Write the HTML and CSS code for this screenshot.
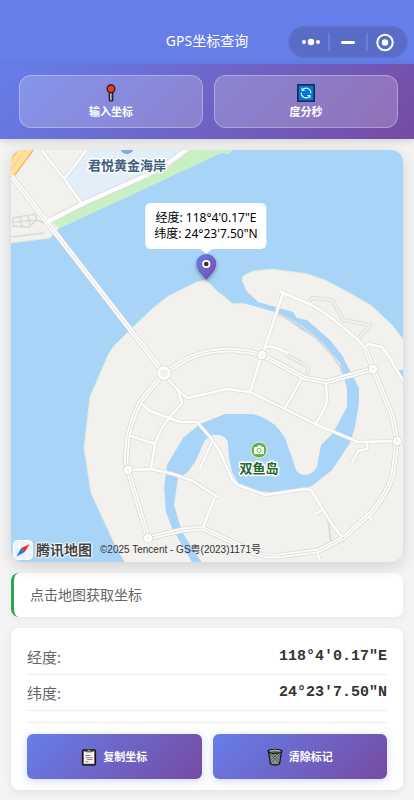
FILE: index.html
```html
<!DOCTYPE html>
<html lang="zh-CN">
<head>
<meta charset="utf-8">
<meta name="viewport" content="width=device-width, initial-scale=1">
<title>GPS坐标查询</title>
<link rel="stylesheet" href="styles.css">
</head>
<body>
<header class="navbar">
  <h1 class="navbar-title">GPS坐标查询</h1>
  <div class="capsule">
    <button class="capsule-btn" type="button" aria-label="更多">
      <svg width="20" height="20" viewBox="0 0 20 20" fill="#fff"><circle cx="3" cy="10" r="2"/><circle cx="10" cy="10" r="3.2"/><circle cx="17" cy="10" r="2"/></svg>
    </button>
    <button class="capsule-btn" type="button" aria-label="最小化">
      <svg width="20" height="20" viewBox="0 0 20 20"><path d="M4.500 10.500H15.500" stroke="#fff" stroke-width="3" stroke-linecap="round"/></svg>
    </button>
    <button class="capsule-btn" type="button" aria-label="关闭">
      <svg width="20" height="20" viewBox="0 0 20 20"><circle cx="10" cy="10.500" r="7.700" fill="none" stroke="#fff" stroke-width="2"/><circle cx="10" cy="10.500" r="3.200" fill="#fff"/></svg>
    </button>
  </div>
</header>

<nav class="toolbar">
  <button class="tool" type="button">
    <svg width="18" height="18" viewBox="0 0 18 18"><rect x="7.300" y="7" width="3.400" height="10" rx="1" fill="#8a8a8a" stroke="#17171d" stroke-width="1.200"/><path d="M8.500 9v7" stroke="#bbb" stroke-width=".8"/><circle cx="9" cy="4.700" r="3.900" fill="#f03a17" stroke="#17171d" stroke-width="1.200"/></svg>
    <span>输入坐标</span>
  </button>
  <button class="tool" type="button">
    <svg width="18" height="18" viewBox="0 0 18 18"><rect x=".8" y=".8" width="16.400" height="16.400" fill="#0078d7" stroke="#15213d" stroke-width="1.400"/><g fill="none" stroke="#e8f6ff" stroke-width="1.100"><path d="M5.500 5.800A4.700 4.700 0 0 1 13.700 9.500M12.500 12.200A4.700 4.700 0 0 1 4.300 8.500"/><path d="M5 3.800v2.700h2.700M13 14.200v-2.700h-2.700"/></g></svg>
    <span>度分秒</span>
  </button>
</nav>

<main class="content">
  <section class="map" aria-label="地图">
    <svg class="map-canvas" viewBox="11 150 392 412" preserveAspectRatio="xMidYMid slice">
      <defs>
        <g id="minor-roads">
          <path d="M40 148L65 180L82 204M88 148L65 178"/>
          <path d="M283 293L264 350M279 290L283 293L312 305L325 313L343 327L357 339L365 348L373 369"/>
          <path d="M365 348L368 344L382 347L387 355M385 350L406 386"/>
          <path d="M265 348Q270 345 276 348L288 353"/>
          <path d="M302 378L285 408M260 360L250 392"/>
          <path d="M168 379L178 390L187 398L210 393L227 389L250 392L285 409L315 424L358 442L397 441"/>
          <path d="M315 424Q326 409 327 400L326 383"/>
          <path d="M178 390L182 403L169 418Q160 429 155 444L151 469"/>
          <path d="M141 403L150 411L169 418L180 422L197 422L210 437L220 452L230 475Q233 484 243 487L265 495L305 489L311 490L322 508Q334 529 343 538"/>
          <path d="M128 435L155 444M128 470L151 469L173 474L193 481L205 489L218 497M215 497L203 527M212 442L200 468"/>
          <path d="M367 443V449L358 451L352 463M322 510L315 514M317 552L321 564M366 513L372 520"/>
        </g>
        <g id="lanes">
          <path d="M308 303L312 298L332 300L343 320L370 325L358 339"/>
          <path d="M285 354L303 364Q309 367 308 372L305 378"/>
        </g>
        <g id="major-roads">
          <path d="M11 176L47 222L157 364L164 373"/>
          <path d="M164 373L140 402L133 418L128 436L126 462L128 470L148 538L165 534L182 530L202 528L232 542L255 553Q266 557 278 556L318 551L343 538L372 512Q389 490 393 474L397 441L392 415L373 369L366 350"/>
          <path d="M164 373L187 359Q205 350 232 350L250 352L262 355L305 378L326 382L373 369"/>
        </g>
        <path id="coast-road" d="M47 222L82 204L147 175Q168 165 188 148"/>
        <g id="junctions">
          <circle cx="164" cy="373" r="5.500"/><circle cx="128" cy="470" r="3"/><circle cx="148" cy="538" r="3"/>
          <circle cx="262" cy="355" r="3"/><circle cx="373" cy="369" r="3"/><circle cx="397" cy="441" r="3"/>
        </g>
      </defs>
      <rect x="-400" y="-400" width="1200" height="1500" fill="#a8d5f7"/>
      <path class="land" d="M-400 -400H400L232 150L228 154L222 152L205 160L59 228L50 238L11 243H-400Z"/>
      <path fill="#c8f0c2" d="M53 223L82 206L147 178L170 166L190 148H234L228 154L222 152L205 160L132 195L59 228Z"/>
      <path fill="#e2eef8" d="M65 178L88 148H186L167 164L147 174L83 203Z"/>
      <path class="land" d="M206 280L197 282Q180 290 167 297Q160 302 152 309L132 328L113 347L108 355L90 397L84 448L91 493L115 545L125 562L200 1100H800V500L403 339L392 325L372 306L348 292L325 280L308 274L272 269L253 271L243 276L242 280L247 292L258 302L233 304L210 284Z"/>
      <path class="channel" d="M206 280L210 283L218 292L233 300L278 313L302 330L322 342L333 355L340 363L343 375L347 388L347 407L333 433L321 445L317 467Q312 475 304 475Q298 474 296 470L292 458L285 438Q280 430 275 425Q264 416 252 414H225L200 424L183 438L167 465L164 488L166 512L172 528L193 564L203 564L182 532L174 505L178 478L188 472L195 462L205 440L213 435Q220 434 224 437Q228 440 228 444L229 458L232 472L238 483Q246 489 255 491L272 492L297 490L312 486L332 470L350 443L355 427L359 403L359 388L348 367L342 355L330 340L307 320L297 318L293 312L258 302L240 285Z"/>
      <path fill="#a8d5f7" d="M398 371L404 369V381Z"/>
      <path class="lane-casing" d="M278 314Q307 327 322 344L332 355L340 367L342 373"/>
      <path class="lane-casing" d="M328 518L331 542L317 549"/>
      <path class="building" d="M13 218L35 214L37 220L29 227L13 226ZM20 217L22 226M28 216L30 226M15 222L37 220L44 223M11 237L44 233"/>
      <path d="M4 179L30 144" stroke="#f5b970" stroke-width="14"/><path d="M4 179L30 144" stroke="#ffe09c" stroke-width="11"/><path d="M4 179L30 144" stroke="#f6cf7c" stroke-width="1"/>
      <use href="#lanes" class="road casing"/>
      <use href="#lanes" class="road lane-surface"/>
      <use href="#minor-roads" class="road casing"/>
      <use href="#coast-road" class="road casing-wide"/>
      <use href="#major-roads" class="road casing-wide"/>
      <use href="#minor-roads" class="road surface"/>
      <use href="#major-roads" class="road surface-wide"/>
      <use href="#major-roads" class="road divider"/>
      <use href="#coast-road" class="road surface-wide"/>
      <use href="#junctions" class="junction-outer"/>
      <use href="#junctions" class="junction"/>
      <circle cx="127" cy="147" r="7" fill="#86aad6"/>
      <text class="place" x="127" y="170">君悦黄金海岸</text>
      <circle cx="259" cy="450" r="8" fill="#63b544" stroke="#dff0e0" stroke-width="1"/>
      <path d="M254 447h3l1-1.500h3l1 1.500h2v7h-10z" fill="#fff"/><circle cx="259" cy="450.500" r="2" fill="#fff" stroke="#63b544"/>
      <text class="place scenic" x="259" y="473">双鱼岛</text>
    </svg>
    <div class="marker">
      <p class="callout">经度: 118°4'0.17"E<br>纬度: 24°23'7.50"N</p>
      <svg class="pin" width="22" height="28" viewBox="0 0 22 28">
        <defs><linearGradient id="pin-fill" x1="0" y1="0" x2="1" y2="1"><stop offset="0" stop-color="#667eea"/><stop offset="1" stop-color="#764ba2"/></linearGradient></defs>
        <path d="M11 27C8 23 1 17.500 1 10.500A10 9.500 0 0 1 21 10.500C21 17.500 14 23 11 27Z" fill="url(#pin-fill)"/>
        <circle cx="11" cy="11" r="3.200" fill="#333" stroke="#fff" stroke-width="1.800"/>
      </svg>
    </div>
    <div class="attribution">
      <svg width="20" height="20" viewBox="0 0 20 20"><rect x=".5" y=".5" width="19" height="19" rx="4" fill="#e8f4fd" stroke="#fff"/><path d="M1 7L19 4M6 1V19M1 14L19 12M14 1V19" stroke="#fff"/><path d="M16.500 4L11.800 12L8 8.200Z" fill="#fa2c19"/><path d="M3.500 16.500L8 8.200L11.800 12Z" fill="#1677ff"/></svg>
      <span class="brand">腾讯地图</span>
      <small class="copyright">©2025 Tencent - GS粤(2023)1171号</small>
    </div>
  </section>

  <p class="hint">点击地图获取坐标</p>

  <section class="card">
    <dl class="coords">
      <div class="coord"><dt>经度:</dt><dd>118°4'0.17"E</dd></div>
      <div class="coord"><dt>纬度:</dt><dd>24°23'7.50"N</dd></div>
    </dl>
    <div class="actions">
      <button class="action" type="button">
        <svg width="16" height="18" viewBox="0 0 16 18"><rect x="1.500" y="2" width="13" height="15" rx="1" fill="#9b6b3c" stroke="#15151b" stroke-width="1.300"/><rect x="3" y="3.700" width="10" height="12" fill="#f4f4f4"/><path d="M5 3.800V2.500h2a1 1 0 0 1 2 0h2v1.300z" fill="#ccc" stroke="#333" stroke-width=".8"/><path d="M4.500 7.500h5M4.500 9.700h7M6 11.500h5.500M4.500 13.700h3" stroke="#888"/></svg>
        <span>复制坐标</span>
      </button>
      <button class="action" type="button">
        <svg width="16" height="18" viewBox="0 0 16 18"><path d="M1.500 3.500L3.500 16Q8 18 12.500 16L14.500 3.500Z" fill="#87918f" stroke="#15151b" stroke-width="1.300"/><path d="M3 6l9 9M5 5l8 8M9 5l4 4M13 6l-9 9M11 5l-7.500 7.500M7 5L3 9" stroke="#4e5957" stroke-width=".8"/><ellipse cx="8" cy="3.300" rx="7" ry="2" fill="#68736f" stroke="#15151b" stroke-width="1.200"/><path d="M3 3Q8 1 13 3" fill="none" stroke="#b4bdbb"/></svg>
        <span>清除标记</span>
      </button>
    </div>
  </section>
</main>
</body>
</html>
```
FILE: styles.css
```css
* {
  box-sizing: border-box;
}

body {
  margin: 0;
  min-height: 100vh;
  display: flex;
  flex-direction: column;
  background: #f4f4f4;
  font-family: "Noto Sans", "Noto Sans CJK SC", sans-serif;
  color: #333;
}

h1, p, dl, dd {
  margin: 0;
}

button {
  margin: 0;
  padding: 0;
  border: 0;
  background: none;
  color: #fff;
  font: inherit;
}

svg {
  display: block;
  flex: none;
}

.navbar {
  position: relative;
  height: 64px;
  padding-top: 18px;
  display: flex;
  align-items: center;
  justify-content: center;
  background: #667eea;
}

.navbar-title {
  color: #fff;
  font-size: 14px;
  line-height: 20px;
  font-weight: 400;
}

.capsule {
  position: absolute;
  right: 6px;
  top: 26px;
  width: 120px;
  height: 32px;
  padding: 0 4px;
  display: flex;
  align-items: center;
  border: 1px solid #6074ce;
  border-radius: 16px;
  background: #586cc8;
}

.capsule-btn {
  flex: 1;
  height: 18px;
  display: flex;
  align-items: center;
  justify-content: center;
}

.capsule-btn + .capsule-btn {
  border-left: 2px solid #6c7fd4;
}

.toolbar {
  position: relative;
  display: flex;
  gap: 11px;
  padding: 11px 16px 11px 19px;
  background: linear-gradient(135deg, #667eea, #764ba2);
  box-shadow: 0 2px 8px rgba(0, 0, 0, 0.15);
}

.tool {
  flex: 1;
  height: 53px;
  display: flex;
  flex-direction: column;
  align-items: center;
  justify-content: center;
  gap: 2px;
  border: 1px solid rgba(255, 255, 255, 0.3);
  border-radius: 12px;
  background: rgba(255, 255, 255, 0.2);
  font-size: 11px;
  line-height: 16px;
  font-weight: 700;
}

.content {
  flex: 1;
  display: flex;
  flex-direction: column;
  gap: 11px;
  padding: 11px 11px 10px;
}

.map {
  position: relative;
  flex: 1;
  min-height: 320px;
  display: flex;
  flex-direction: column;
  justify-content: flex-end;
  overflow: hidden;
  border-radius: 12px;
  box-shadow: 0 4px 16px rgba(0, 0, 0, 0.15);
}

.map-canvas {
  position: absolute;
  inset: 0;
  width: 100%;
  height: 100%;
}

.land {
  fill: #f2f1ed;
  stroke: #dcebdc;
  stroke-width: 1;
}

.channel {
  fill: #a8d5f7;
}

.road {
  fill: none;
  stroke-linejoin: round;
}

.casing {
  stroke: #dededc;
  stroke-width: 4;
}

.surface {
  stroke: #fdfdfd;
  stroke-width: 2.5;
}

.lane-casing {
  fill: none;
  stroke: #dadad8;
  stroke-width: 2;
}

.lane-surface {
  stroke: #f2f1ed;
  stroke-width: 2;
}

.casing-wide {
  stroke: #d8d8d6;
  stroke-width: 6;
}

.surface-wide {
  stroke: #fdfdfd;
  stroke-width: 4.5;
}

.divider {
  stroke: #dededc;
  stroke-width: 1;
}

.junction-outer {
  fill: #f2f1ed;
  stroke: #d8d8d6;
  stroke-width: 4;
}

.junction {
  fill: #f2f1ed;
  stroke: #fff;
  stroke-width: 2.5;
}

.building {
  fill: none;
  stroke: #d8d8d6;
  stroke-width: 1.5;
}

.place {
  fill: #42607f;
  stroke: #fff;
  stroke-width: 3;
  stroke-linejoin: round;
  paint-order: stroke;
  text-anchor: middle;
  font-size: 13px;
  font-weight: 700;
  font-family: "Noto Sans CJK SC", sans-serif;
}

.scenic {
  fill: #26682c;
}

.marker {
  position: absolute;
  left: calc(50% - 1px);
  top: 32%;
  display: flex;
  flex-direction: column;
  align-items: center;
  gap: 4px;
  transform: translate(-50%, -100%);
  margin-top: -1px;
}

.callout {
  position: relative;
  padding: 7px 9px;
  border-radius: 5px;
  background: #fff;
  color: #000;
  font-size: 12px;
  line-height: 16px;
  text-align: center;
  white-space: nowrap;
}

.callout::after {
  content: "";
  position: absolute;
  left: 50%;
  top: 100%;
  margin-left: -6px;
  border: 6px solid transparent;
  border-top: 5px solid #fff;
  border-bottom: 0;
}

.pin {
  filter: drop-shadow(0 2px 2px rgba(0, 0, 0, 0.3));
}

.attribution {
  position: relative;
  display: flex;
  align-items: center;
  gap: 3px;
  padding: 2px;
}

.brand {
  color: #444;
  font-size: 14px;
  line-height: 20px;
  font-weight: 700;
  text-shadow: 1px 0 1px #fff, -1px 0 1px #fff, 0 1px 1px #fff, 0 -1px 1px #fff, 0 0 2px #fff;
}

.copyright {
  margin-left: 5px;
  font-family: "Liberation Sans", "Noto Sans CJK SC", sans-serif;
  font-size: 10px;
  line-height: 16px;
}

.hint {
  padding: 12px 16px;
  border-left: 3px solid #28a745;
  border-radius: 8px;
  background: #fff;
  box-shadow: 0 2px 8px rgba(0, 0, 0, 0.05);
  color: #666;
  font-size: 14px;
  line-height: 20px;
}

.card {
  padding: 11px 16px;
  border-radius: 8px;
  background: #fff;
  box-shadow: 0 2px 8px rgba(0, 0, 0, 0.08);
}

.coord {
  height: 36px;
  display: flex;
  align-items: center;
  justify-content: space-between;
  border-bottom: 1px solid #eee;
  font-size: 15px;
  line-height: 20px;
}

.coord dt {
  color: #666;
}

.coord dd {
  font-family: "Liberation Mono", monospace;
  font-weight: 700;
}

.actions {
  display: flex;
  gap: 11px;
  margin-top: 11px;
  padding-top: 11px;
  border-top: 1px solid #eee;
}

.action {
  flex: 1;
  height: 45px;
  display: flex;
  align-items: center;
  justify-content: center;
  gap: 6px;
  border-radius: 6px;
  background: linear-gradient(135deg, #667eea, #764ba2);
  box-shadow: 0 2px 8px rgba(102, 126, 234, 0.3);
  font-size: 11px;
  line-height: 16px;
  font-weight: 700;
}
```
